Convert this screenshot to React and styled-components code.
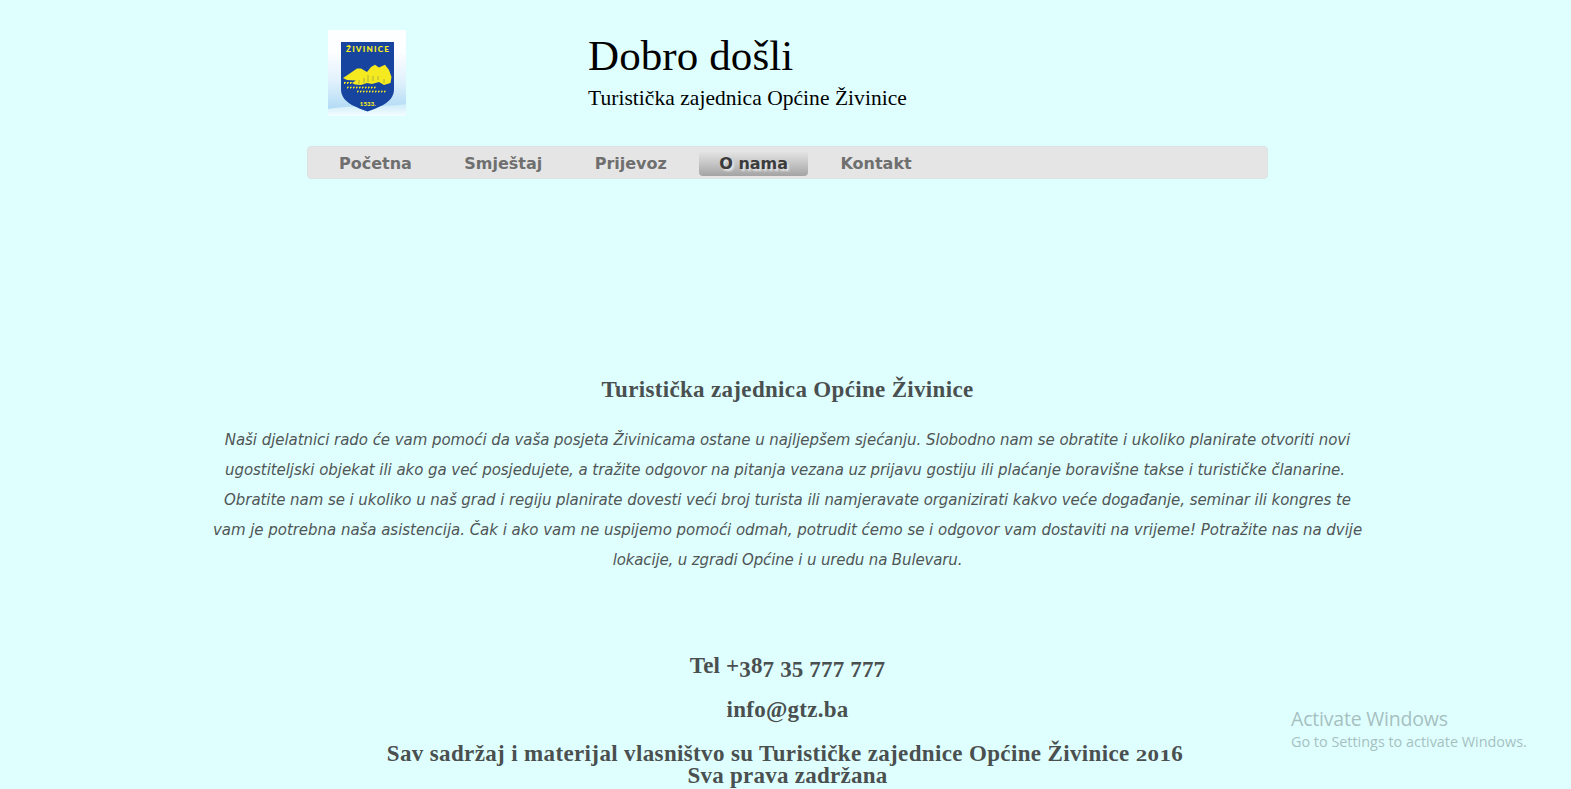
import React from 'react';
import styled, { createGlobalStyle } from 'styled-components';

const Global = createGlobalStyle`
  html, body { margin: 0; height: 789px; overflow: hidden; }
  body { background: #dfffff; }
`;

const serif = '"Liberation Serif", serif';
const sans = '"DejaVu Sans", sans-serif';

const Page = styled.div`
  position: relative;
  display: flex;
  flex-direction: column;
  align-items: center;
  width: 1575px;
  height: 789px;
  overflow: hidden;
`;

const Header = styled.header`
  display: flex;
  width: 961px;
  height: 146px;
  padding: 29px 0 0 21px;
  box-sizing: border-box;
`;

const Logo = styled.svg`
  width: 78px;
  height: 87px;
  flex: none;
`;

const Titles = styled.div`
  margin-left: 182px;
  padding-top: 3px;
  color: #000;
  white-space: nowrap;
`;

const Title = styled.h1`
  margin: 0;
  font: 400 43px/48px ${serif};
  letter-spacing: 0.1px;
`;

const Subtitle = styled.p`
  margin: 5px 0 0;
  font: 400 21.5px/26px ${serif};
  letter-spacing: 0.04px;
`;

const Nav = styled.nav`
  display: flex;
  align-items: center;
  gap: 12.4px;
  width: 961px;
  height: 33px;
  padding: 1px 12px 0;
  box-sizing: border-box;
  border-radius: 5px;
  background: #e5e5e5;
  box-shadow: inset 0 0 1px #b9c9c9;
`;

const NavItem = styled.a`
  padding: 1px 20px 0;
  border-radius: 0 0 4px 4px;
  font: 700 16px/24px ${sans};
  white-space: nowrap;
  color: ${(p) => (p.$active ? '#3c3c3c' : '#6f6f6f')};
  background: ${(p) => (p.$active ? 'linear-gradient(#e5e5e5, #c6c6c6 50%, #a3a3a3)' : 'none')};
  text-shadow: ${(p) => (p.$active ? '2px 2px 2px #e6e6e6' : 'none')};
`;

const Main = styled.main`
  display: flex;
  flex-direction: column;
  align-items: center;
  padding-top: 200px;
  color: #4a4f4f;
  white-space: nowrap;
`;

const Heading = styled.h3`
  margin: 0 0 ${(p) => p.$gap || 0}px;
  font: 700 23px/22px ${serif};
  letter-spacing: ${(p) => p.$track}px;
  text-align: center;
`;

const Paragraph = styled.p`
  margin: 0 0 80px;
  width: 1160px;
  color: #505656;
  font: italic 400 15px/30px ${sans};
  text-align: center;
`;

const Line = styled.span`
  display: block;
  letter-spacing: ${(p) => p.$track}px;
  padding-right: ${(p) => p.$trail || 0}px;
`;

const LowDigit = styled.span`
  display: inline-block;
  line-height: 0;
  transform: translateY(4px);
`;

const SmallDigit = styled.span`
  display: inline-block;
  transform-origin: 50% 77%;
  transform: scaleY(0.76);
`;

const Watermark = styled.aside`
  position: absolute;
  left: 1291px;
  top: 706px;
  color: #a6bfbf;
  font: 400 14.4px/20px "Open Sans", sans-serif;
  white-space: nowrap;
`;

const WatermarkTitle = styled.div`
  font-size: 19.5px;
  line-height: 26px;
  letter-spacing: -0.2px;
`;

const crops = (y, from, to) =>
  Array.from({ length: Math.floor((to - from) / 3) }, (_, i) => (
    <path key={i} d={`M${from + i * 3} ${y}h2.2l-1.4 1.9h-0.8z`} />
  ));

const CoatOfArms = () => (
  <Logo viewBox="0 0 78 87">
    <defs>
      <linearGradient id="sky" x1="0" y1="0" x2="0" y2="1">
        <stop offset="0.25" stopColor="#fdfeff" />
        <stop offset="0.6" stopColor="#e0f1fc" />
        <stop offset="0.9" stopColor="#b4dcf5" />
      </linearGradient>
      <linearGradient id="fade" x1="0" y1="0" x2="0" y2="1">
        <stop offset="0" stopColor="#cdebfa" />
        <stop offset="1" stopColor="#f4feff" />
      </linearGradient>
    </defs>
    <rect y="1" width="78" height="86" fill="url(#sky)" />
    <path d="M0 80C28 75 52 79 78 75V87H0Z" fill="url(#fade)" />
    <path d="M13 13H66V60C66 72 55 77 39.5 82.5C24 77 13 72 13 60Z" fill="#17449f" />
    <text x="39.5" y="23.4" textAnchor="middle" textLength="43" fontFamily="Lato" fontWeight="900" fontSize="8.2" fill="#f7ee20">ŽIVINICE</text>
    <g fill="#f5e91f">
      <path d="M15 49L21 45L29 39.5L33 39.5L39 43L43 38L47 35.7L51 38.5L57 35.7L61 41L63.5 48L62.5 54L56 56L51 53L44 55L39 54L33 56L27 55.5L24 54L28 51.5L19 51Z" />
      {crops(53, 16, 25)}
      {crops(57.7, 19, 49)}
      {crops(61.7, 29, 60)}
    </g>
    <path d="M31 55V51M36 54V49M40 53V46M45 52V47M50 51V47M56 54V50" stroke="#8f9b48" strokeWidth="0.7" />
    <text x="39.8" y="76.7" textAnchor="middle" textLength="16" fontFamily="Lato" fontWeight="900" fontSize="6" fill="#f7ee20">1533.</text>
  </Logo>
);

const links = ['Početna', 'Smještaj', 'Prijevoz', 'O nama', 'Kontakt'];

const oldStyle = (text) =>
  [...text].map((ch, i) => {
    if ('34579'.includes(ch)) return <LowDigit key={i}>{ch}</LowDigit>;
    if ('012'.includes(ch)) return <SmallDigit key={i}>{ch}</SmallDigit>;
    return ch;
  });

export default function App() {
  return (
    <Page>
      <Global />
      <Header>
        <CoatOfArms />
        <Titles>
          <Title>Dobro došli</Title>
          <Subtitle>Turistička zajednica Općine Živinice</Subtitle>
        </Titles>
      </Header>
      <Nav>
        {links.map((label) => (
          <NavItem key={label} $active={label === 'O nama'}>{label}</NavItem>
        ))}
      </Nav>
      <Main>
        <Heading $gap={24} $track={0.33}>Turistička zajednica Općine Živinice</Heading>
        <Paragraph>
          <Line $track={-0.055}>Naši djelatnici rado će vam pomoći da vaša posjeta Živinicama ostane u najljepšem sjećanju. Slobodno nam se obratite i ukoliko planirate otvoriti novi</Line>
          <Line $track={-0.055} $trail={5}>ugostiteljski objekat ili ako ga već posjedujete, a tražite odgovor na pitanja vezana uz prijavu gostiju ili plaćanje boravišne takse i turističke članarine.</Line>
          <Line $track={-0.065}>Obratite nam se i ukoliko u naš grad i regiju planirate dovesti veći broj turista ili namjeravate organizirati kakvo veće događanje, seminar ili kongres te</Line>
          <Line $track={-0.035}>vam je potrebna naša asistencija. Čak i ako vam ne uspijemo pomoći odmah, potrudit ćemo se i odgovor vam dostaviti na vrijeme! Potražite nas na dvije</Line>
          <Line $track={-0.14}>lokacije, u zgradi Općine i u uredu na Bulevaru.</Line>
        </Paragraph>
        <Heading $gap={22} $track={0.15}>Tel +{oldStyle('387 35 777 777')}</Heading>
        <Heading $gap={22} $track={0.25}>info@gtz.ba</Heading>
        <Heading>
          <Line $track={0.36} $trail={5}>Sav sadržaj i materijal vlasništvo su Turističke zajednice Općine Živinice {oldStyle('2016')}</Line>
          <Line $track={0.24}>Sva prava zadržana</Line>
        </Heading>
      </Main>
      <Watermark>
        <WatermarkTitle>Activate Windows</WatermarkTitle>
        Go to Settings to activate Windows.
      </Watermark>
    </Page>
  );
}
